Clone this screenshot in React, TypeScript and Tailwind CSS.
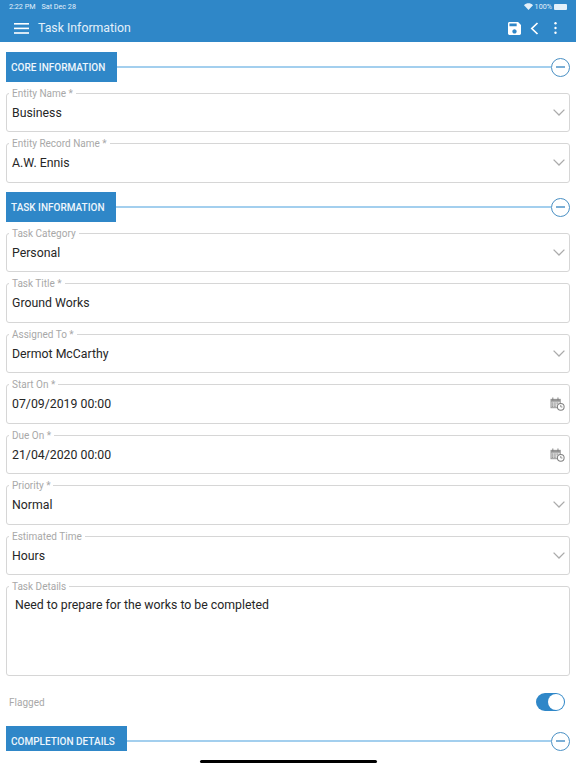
import React from 'react';

const font = { fontFamily: 'Roboto, sans-serif' };

const Chevron = () => (
  <svg width="12" height="7" viewBox="0 0 12 7" fill="none" className="absolute right-[4px] top-[15px]">
    <path d="M.6.6L6 6l5.4-5.4" stroke="#ababab" strokeWidth="1.3" />
  </svg>
);

const CalendarClock = () => (
  <svg width="15" height="14" viewBox="0 0 16 15" className="absolute right-[4px] top-[12px]">
    <rect x="0.5" y="2" width="11" height="10" fill="#969696" />
    <rect x="2.5" y="0.5" width="1" height="3" fill="#7c7c7c" />
    <rect x="8" y="0.5" width="1" height="3" fill="#7c7c7c" />
    <rect x="1.5" y="5" width="9" height="6" fill="#dedede" />
    <path d="M2 6.5h1.5M4.5 6.5h1.5M7 6.5h1.5M2 8.5h1.5M4.5 8.5h1.5M2 10h1.5M4.5 10h1.5" stroke="#888" strokeWidth="1" />
    <circle cx="11.5" cy="10.5" r="3.6" fill="#fff" stroke="#808080" strokeWidth="1.1" />
    <path d="M11.5 8.5v2.2h1.8" fill="none" stroke="#808080" strokeWidth="0.9" />
  </svg>
);

const Field = ({ label, value, icon, tall }: { label: string; value: string; icon?: 'select' | 'date'; tall?: boolean }) => (
  <div className={`relative border border-[#d6d6d6] rounded-[3px] ${tall ? 'h-[90px]' : 'h-[39.5px]'}`}>
    <span className="absolute left-[2px] top-[-7px] bg-white px-[3px] text-[10px] leading-[13px] text-[#a8a8a8]">{label}</span>
    <div className={`text-[12.3px] leading-[16px] text-[#262626] ${tall ? 'pl-[8px] pt-[9.5px]' : 'pl-[5px] pt-[11px]'}`}>{value}</div>
    {icon === 'select' && <Chevron />}
    {icon === 'date' && <CalendarClock />}
  </div>
);

const Section = ({ title, width }: { title: string; width: string }) => (
  <div className="flex items-center h-[30px] px-[6px]">
    <div className={`${width} h-full bg-[#2f87c8] flex items-center pl-[5px] text-[10px] font-medium text-[#eef6fc] shrink-0`}>{title}</div>
    <div className="flex-1 h-[2px] bg-[#a3cfee]" />
    <div className="w-[19px] h-[19px] rounded-full border border-[#4a90c4] flex items-center justify-center shrink-0">
      <div className="w-[9px] h-[2px] bg-[#7aaed6]" />
    </div>
  </div>
);

export default function App() {
  return (
    <div className="relative w-[576px] h-[768px] overflow-hidden bg-white flex flex-col" style={font}>
      <header className="h-[42px] bg-[#2f87c8] text-white shrink-0 px-[9px]">
        <div className="h-[14px] flex items-center justify-between text-[7.2px] text-[#e3f0fa]">
          <div className="flex gap-[6px]">
            <span>2:22 PM</span>
            <span>Sat Dec 28</span>
          </div>
          <div className="flex items-center gap-[2px]">
            <svg width="9" height="7" viewBox="0 0 12 9" fill="#e3f0fa">
              <path d="M6 9L0 2.8C3.4-.5 8.6-.5 12 2.8L6 9z" />
            </svg>
            <span>100%</span>
            <div className="w-[13px] h-[6px] bg-[#e3f0fa] rounded-[1px]" />
          </div>
        </div>
        <div className="h-[28px] flex items-center">
          <svg width="15" height="11" viewBox="0 0 15 11" fill="#fff" className="ml-[5px]">
            <rect width="15" height="1.6" />
            <rect y="4.6" width="15" height="1.6" />
            <rect y="9.2" width="15" height="1.6" />
          </svg>
          <span className="ml-[9px] text-[12.3px] text-[#e3f0fa]">Task Information</span>
          <div className="ml-auto flex items-center">
            <svg width="13" height="13" viewBox="3 3 18 18" fill="#fff">
              <path d="M17 3H5c-1.11 0-2 .9-2 2v14c0 1.1.89 2 2 2h14c1.1 0 2-.9 2-2V7l-4-4zm-5 16c-1.66 0-3-1.34-3-3s1.34-3 3-3 3 1.34 3 3-1.34 3-3 3zm3-10H5V5h10v4z" />
            </svg>
            <svg width="9" height="13" viewBox="0 0 9 13" fill="none" className="ml-[9px]">
              <path d="M7.5 1L1.8 6.5l5.7 5.5" stroke="#fff" strokeWidth="1.7" />
            </svg>
            <svg width="3" height="12" viewBox="0 0 3 12" fill="#fff" className="ml-[15px] mr-[10px]">
              <circle cx="1.5" cy="1.3" r="1.2" />
              <circle cx="1.5" cy="6" r="1.2" />
              <circle cx="1.5" cy="10.7" r="1.2" />
            </svg>
          </div>
        </div>
      </header>

      <main className="flex flex-col pt-[10px]">
        <Section title="CORE INFORMATION" width="w-[111px]" />
        <div className="flex flex-col gap-[11px] px-[6px] mt-[10.5px]">
          <Field label="Entity Name *" value="Business" icon="select" />
          <Field label="Entity Record Name *" value="A.W. Ennis" icon="select" />
        </div>
        <div className="mt-[9.5px]">
          <Section title="TASK INFORMATION" width="w-[110px]" />
        </div>
        <div className="flex flex-col gap-[11px] px-[6px] mt-[10.5px]">
          <Field label="Task Category" value="Personal" icon="select" />
          <Field label="Task Title *" value="Ground Works" />
          <Field label="Assigned To *" value="Dermot McCarthy" icon="select" />
          <Field label="Start On *" value="07/09/2019 00:00" icon="date" />
          <Field label="Due On *" value="21/04/2020 00:00" icon="date" />
          <Field label="Priority *" value="Normal" icon="select" />
          <Field label="Estimated Time" value="Hours" icon="select" />
          <Field label="Task Details" value="Need to prepare for the works to be completed" tall />
        </div>
        <div className="flex items-center justify-between h-[18px] mt-[17px] pl-[9px] pr-[11px]">
          <span className="text-[10px] text-[#a8a8a8]">Flagged</span>
          <div className="w-[29px] h-[18px] rounded-full bg-[#2f87c8] flex items-center justify-end pr-px">
            <div className="w-[16px] h-[16px] rounded-full bg-white" />
          </div>
        </div>
        <div className="mt-[15px]">
          <Section title="COMPLETION DETAILS" width="w-[121px]" />
        </div>
      </main>

      <div className="absolute left-0 right-0 top-[751px] bottom-0 bg-white" />
      <div className="absolute left-[200px] top-[760px] w-[177px] h-[3px] rounded-full bg-black" />
    </div>
  );
}
